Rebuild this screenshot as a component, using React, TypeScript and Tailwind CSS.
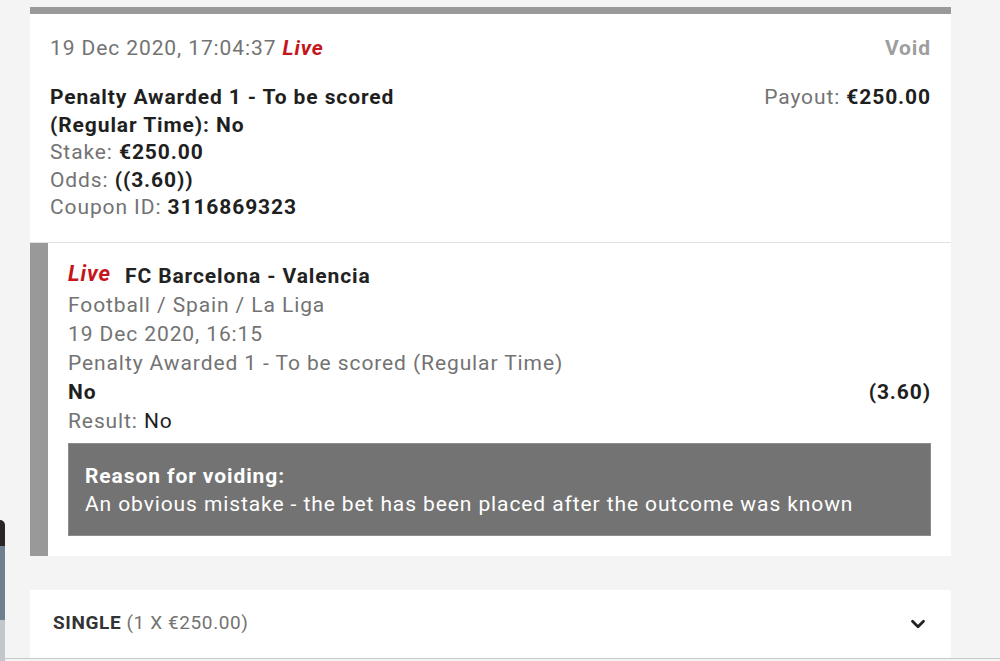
import React from "react";
import { FiChevronDown } from "react-icons/fi";

// Bet slip detail — voided single bet
const bet = {
  placed: "19 Dec 2020, 17:04:37",
  status: "Void",
  market: "Penalty Awarded 1 - To be scored (Regular Time): No",
  stake: "€250.00",
  odds: "((3.60))",
  couponId: "3116869323",
  payout: "€250.00",
};

const LiveTag = ({ className = "" }: { className?: string }) => (
  <span className={`italic font-bold text-[#c4161c] ${className}`}>Live</span>
);

const Selection = () => (
  <div className="flex border-l-[18px] border-[#999999] bg-white">
    <div className="flex-1 px-5 pt-[18px] pb-5 leading-[29px]">
      <div className="flex items-baseline gap-[14px]">
        <LiveTag className="text-[22px] -translate-y-[2px]" />
        <span className="font-bold text-[#222]">FC Barcelona - Valencia</span>
      </div>
      <div className="text-[#737373]">Football / Spain / La Liga</div>
      <div className="text-[#737373]">19 Dec 2020, 16:15</div>
      <div className="text-[#737373]">Penalty Awarded 1 - To be scored (Regular Time)</div>
      <div className="flex justify-between font-bold text-[#1f1f1f]">
        <span>No</span>
        <span>(3.60)</span>
      </div>
      <div>
        <span className="text-[#737373]">Result: </span>
        <span className="text-[#1f1f1f]">No</span>
      </div>
      <div className="mt-[7px] border border-[#8c8c8c] bg-[#737373] px-4 pt-[18px] pb-[17px] text-white leading-[28px]">
        <div className="font-bold">Reason for voiding:</div>
        <div>An obvious mistake - the bet has been placed after the outcome was known</div>
      </div>
    </div>
  </div>
);

export default function App() {
  return (
    <div className="relative min-h-[661px] overflow-hidden bg-[#f4f4f4] font-['Roboto',sans-serif] text-[21px] tracking-[0.9px]">
      {/* edge of another window poking in */}
      <div className="absolute left-0 top-[520px] h-[141px] w-[5px] overflow-hidden rounded-tr-[6px] bg-[#2a2424]">
        <div className="mt-[26px] h-[74px] bg-[#6f7f90]" />
        <div className="h-[41px] bg-[#c3c7cc]" />
      </div>

      <div className="pl-[30px] pr-[49px] pt-[7px]">
        <div className="border-t-[7px] border-[#999999] bg-white">
          <div className="border-b border-[#e2e2e2] px-5 pt-5 pb-5">
            <div className="flex justify-between leading-[28px]">
              <div className="text-[#737373]">
                {bet.placed} <LiveTag />
              </div>
              <div className="font-bold text-[#9e9e9e]">{bet.status}</div>
            </div>
            <div className="mt-[22px] flex justify-between leading-[27.5px]">
              <div className="max-w-[400px]">
                <div className="font-bold text-[#1f1f1f]">{bet.market}</div>
                <div>
                  <span className="text-[#737373]">Stake: </span>
                  <span className="font-bold text-[#1f1f1f]">{bet.stake}</span>
                </div>
                <div>
                  <span className="text-[#737373]">Odds: </span>
                  <span className="font-bold text-[#1f1f1f]">{bet.odds}</span>
                </div>
                <div>
                  <span className="text-[#737373]">Coupon ID: </span>
                  <span className="font-bold text-[#1f1f1f]">{bet.couponId}</span>
                </div>
              </div>
              <div>
                <span className="text-[#737373]">Payout: </span>
                <span className="font-bold text-[#1f1f1f]">{bet.payout}</span>
              </div>
            </div>
          </div>
          <Selection />
        </div>

        <div className="mt-[34px] flex h-[68px] items-center justify-between bg-white pl-[23px] pr-[22px] text-[19px] tracking-[0.6px]">
          <div>
            <span className="font-bold text-[#333]">SINGLE</span>
            <span className="text-[#737373]"> (1 X €250.00)</span>
          </div>
          <FiChevronDown className="h-[22px] w-[22px] text-[#222]" strokeWidth={3} />
        </div>
      </div>
      <div className="h-px bg-[#c8c8c8]" />
    </div>
  );
}
